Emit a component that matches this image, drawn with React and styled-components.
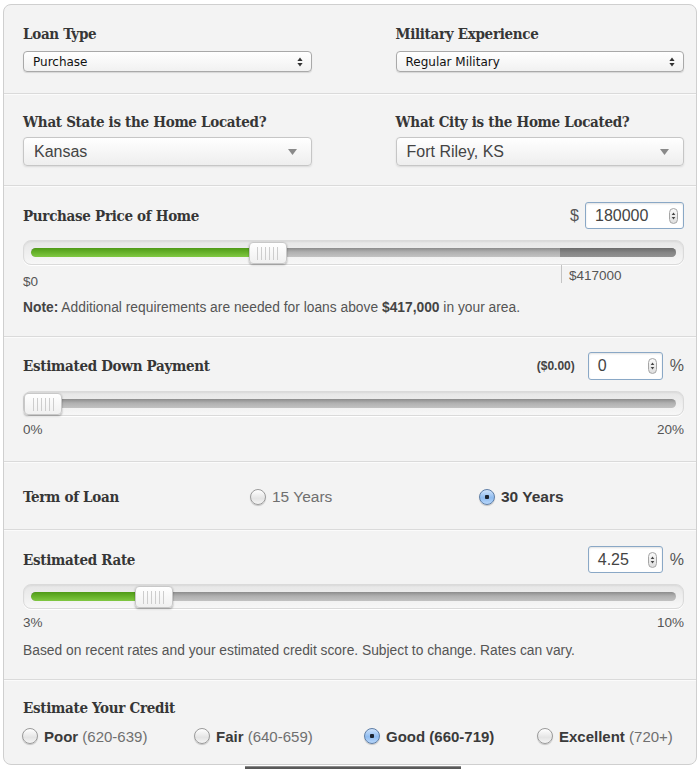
import React from 'react'
import styled, { createGlobalStyle } from 'styled-components'

const GlobalStyle = createGlobalStyle`
  body {
    margin: 0;
    background: #fff;
    font-family: "Liberation Sans", Arial, sans-serif;
    color: #555;
  }
`

const Panel = styled.div`
  margin: 4px 3px 0 3px;
  background: #f3f3f3;
  border: 1px solid #cfcfcf;
  border-radius: 8px;
  overflow: hidden;
`

const Section = styled.div`
  padding: ${props => props.pad || '18px 12px 20px 19px'};
  border-top: ${props => props.first ? 'none' : '1px solid #dadada'};
  box-shadow: ${props => props.first ? 'none' : 'inset 0 1px 0 #fbfbfb'};
`

const TwoCol = styled.div`
  display: grid;
  grid-template-columns: 1fr 1fr;
  column-gap: 84px;
`

const Field = styled.div`
  display: flex;
  flex-direction: column;
  gap: ${props => props.gap || 7}px;
`

const Heading = styled.div`
  font-family: "DejaVu Serif Condensed", "DejaVu Serif", serif;
  font-weight: bold;
  font-size: 15px;
  line-height: 20px;
  letter-spacing: -0.3px;
  color: #363636;
`

const SmallSelect = styled.div`
  height: 19px;
  border: 1px solid #a9a9a9;
  border-radius: 4px;
  background: linear-gradient(#ffffff, #f1f1f1);
  box-shadow: 0 1px 1px rgba(0, 0, 0, 0.12);
  display: flex;
  align-items: center;
  justify-content: space-between;
  padding: 0 8px 0 9px;
  font-family: "DejaVu Sans", sans-serif;
  font-size: 12px;
  color: #111;
`

const BigSelect = styled.div`
  height: 27px;
  border: 1px solid #c6c6c6;
  border-radius: 4px;
  background: linear-gradient(#ffffff, #eeeeee);
  box-shadow: 0 1px 2px rgba(0, 0, 0, 0.1);
  display: flex;
  align-items: center;
  justify-content: space-between;
  padding: 0 14px 0 10px;
  font-size: 16px;
  color: #444;
`

const UpDown = () => (
  <svg width="6" height="10" viewBox="0 0 6 10">
    <path d="M3 0.5 L5.6 4 H0.4 Z" fill="#333" />
    <path d="M3 9.5 L5.6 6 H0.4 Z" fill="#333" />
  </svg>
)

const DownTri = () => (
  <svg width="9" height="6" viewBox="0 0 9 6">
    <path d="M0 0 H9 L4.5 6 Z" fill="#8a8a8a" />
  </svg>
)

const HeadRow = styled.div`
  display: flex;
  align-items: center;
  justify-content: space-between;
  height: ${props => props.h || 27}px;
`

const InputGroup = styled.div`
  display: flex;
  align-items: center;
  gap: ${props => props.gap || 6}px;
  font-size: 16px;
  color: #555;
`

const Amount = styled.span`
  font-size: 12px;
  font-weight: bold;
  color: #444;
  margin-right: 6px;
`

const NumberBox = styled.div`
  box-sizing: border-box;
  width: ${props => props.w}px;
  height: ${props => props.h || 27}px;
  border: 1px solid #8aa8c6;
  border-radius: 3px;
  background: #fff;
  box-shadow: inset 0 1px 2px rgba(0, 0, 0, 0.12);
  display: flex;
  align-items: center;
  justify-content: space-between;
  padding: 0 5px 0 9px;
  font-size: 16px;
  color: #444;
`

const Spinner = styled.div`
  width: 7px;
  height: 14px;
  border: 1px solid #a5a5a5;
  border-radius: 5px;
  background: linear-gradient(#fafafa, #dedede);
  display: flex;
  align-items: center;
  justify-content: center;
`

const SpinArrows = () => (
  <svg width="5" height="10" viewBox="0 0 5 10">
    <path d="M2.5 1.5 L4.3 4 H0.7 Z" fill="#444" />
    <path d="M2.5 8.5 L4.3 6 H0.7 Z" fill="#444" />
  </svg>
)

const Track = styled.div`
  position: relative;
  margin-top: 11px;
  height: 23px;
  border: 1px solid #dadada;
  border-radius: 8px;
  background: linear-gradient(#e6e6e6, #f7f7f7);
  box-shadow: inset 0 1px 2px rgba(0, 0, 0, 0.06), 0 1px 0 #fff;
  display: flex;
  align-items: center;
  padding: 0 7px;
`

const Groove = styled.div`
  position: relative;
  flex: 1;
  height: 9px;
  border-radius: 5px;
  background: linear-gradient(#8c8c8c, #b0b0b0 45%, #c2c2c2);
  overflow: hidden;
`

const Fill = styled.div`
  position: absolute;
  top: 0;
  bottom: 0;
  left: 0;
  border-radius: 5px;
  background: linear-gradient(#4f9a17, #67b22b 50%, #80c842);
`

const OverLimit = styled.div`
  position: absolute;
  top: 0;
  bottom: 0;
  right: 0;
  background: linear-gradient(#6b6b6b, #858585 50%, #929292);
`

const Handle = styled.div`
  position: absolute;
  top: 1px;
  box-sizing: border-box;
  width: 38px;
  height: 22px;
  border: 1px solid #c8c8c8;
  border-radius: 4px;
  background: linear-gradient(#ffffff, #f0f0f0);
  box-shadow: 0 1px 2px rgba(0, 0, 0, 0.35);
  display: flex;
  align-items: center;
  justify-content: center;
  gap: 3px;
`

const Grip = styled.span`
  width: 1px;
  height: 13px;
  background: #cdcdcd;
`

const Scale = styled.div`
  position: relative;
  display: flex;
  justify-content: space-between;
  font-size: 13.5px;
  line-height: 16px;
  color: #555;
  margin-top: ${props => props.top || 6}px;
`

const Limit = styled.div`
  position: absolute;
  top: -9px;
  height: 18px;
  box-sizing: border-box;
  padding-top: 3px;
  border-left: 1px solid #c4c4c4;
  padding-left: 7px;
  line-height: 16px;
`

const Note = styled.p`
  margin: ${props => props.top || 10}px 0 0;
  font-size: 13.8px;
  line-height: 16px;
  color: #555;
  b {
    color: #444;
  }
`

const TermRow = styled.div`
  display: grid;
  grid-template-columns: 227px 229px 1fr;
  align-items: center;
  height: 20px;
`

const CreditRow = styled.div`
  display: grid;
  grid-template-columns: 172px 170px 173px 1fr;
  align-items: center;
  height: 18px;
  margin-left: -1px;
  margin-top: 9px;
`

const RadioLabel = styled.label`
  display: flex;
  align-items: center;
  gap: 6px;
  font-size: ${props => props.size || 15}px;
  color: ${props => props.checked ? '#3a3a3a' : '#6f6f6f'};
  font-weight: ${props => props.checked ? 'bold' : 'normal'};
  b {
    color: #3a3a3a;
  }
`

const Dot = styled.span`
  box-sizing: border-box;
  width: 16px;
  height: 16px;
  border-radius: 50%;
  border: 1px solid ${props => props.checked ? '#5e7ea6' : '#9a9a9a'};
  background: ${props => props.checked
    ? 'radial-gradient(circle at 50% 50%, #1c2430 0 2px, transparent 2.5px), linear-gradient(#cfe3fb, #8fbcf0 55%, #b7d6fa)'
    : 'linear-gradient(#ffffff, #e4e4e4 60%, #f4f4f4)'};
  box-shadow: 0 1px 1px rgba(0, 0, 0, 0.2);
  flex-shrink: 0;
`

const Radio = ({checked, size, children}) => (
  <RadioLabel checked={checked} size={size}>
    <Dot checked={checked} />
    <span>{children}</span>
  </RadioLabel>
)

const Tab = styled.div`
  width: 216px;
  height: 20px;
  margin: 1px 0 0 245px;
  background: linear-gradient(#5a5a5a, #3e3e3e);
  border-top: 1px solid #8a8a8a;
`

const Slider = ({pct, limit, fill}) => {
  const pos = `calc(${pct / 100} * (100% - 38px))`
  return (
    <Track>
      <Groove>
        {fill && <Fill style={{width: `calc(${pct / 100} * (100% + 14px - 38px) + 19px)`}} />}
        {limit && <OverLimit style={{left: `calc(${limit}% - 1px)`}} />}
      </Groove>
      <Handle style={{left: pos}}>
        {[0, 1, 2, 3, 4, 5].map(i => <Grip key={i} />)}
      </Handle>
    </Track>
  )
}

const Spin = () => (
  <Spinner><SpinArrows /></Spinner>
)

export default function App() {
  return (
    <>
      <GlobalStyle />
      <Panel>
        <Section first pad="19px 12px 21px 19px">
          <TwoCol>
            <Field>
              <Heading>Loan Type</Heading>
              <SmallSelect>Purchase<UpDown /></SmallSelect>
            </Field>
            <Field>
              <Heading>Military Experience</Heading>
              <SmallSelect>Regular Military<UpDown /></SmallSelect>
            </Field>
          </TwoCol>
        </Section>

        <Section pad="18px 12px 19px 19px">
          <TwoCol>
            <Field gap={5}>
              <Heading>What State is the Home Located?</Heading>
              <BigSelect>Kansas<DownTri /></BigSelect>
            </Field>
            <Field gap={5}>
              <Heading>What City is the Home Located?</Heading>
              <BigSelect>Fort Riley, KS<DownTri /></BigSelect>
            </Field>
          </TwoCol>
        </Section>

        <Section pad="16px 12px 20px 19px">
          <HeadRow>
            <Heading>Purchase Price of Home</Heading>
            <InputGroup>
              $
              <NumberBox w={99}>180000<Spin /></NumberBox>
            </InputGroup>
          </HeadRow>
          <Slider pct={36.2} limit={82.1} fill />
          <Scale top={9}>
            <span>$0</span>
            <Limit style={{left: '81.4%'}}>$417000</Limit>
          </Scale>
          <Note top={10}><b>Note:</b> Additional requirements are needed for loans above <b>$417,000</b> in your area.</Note>
        </Section>

        <Section pad="15px 12px 23px 19px">
          <HeadRow h={28}>
            <Heading>Estimated Down Payment</Heading>
            <InputGroup gap={7}>
              <Amount>($0.00)</Amount>
              <NumberBox w={75} h={28}>0<Spin /></NumberBox>
              %
            </InputGroup>
          </HeadRow>
          <Slider pct={0} />
          <Scale>
            <span>0%</span>
            <span>20%</span>
          </Scale>
        </Section>

        <Section pad="25px 12px 22px 19px">
          <TermRow>
            <Heading>Term of Loan</Heading>
            <Radio size={15.5}>15 Years</Radio>
            <Radio size={15.5} checked>30 Years</Radio>
          </TermRow>
        </Section>

        <Section pad="16px 12px 20px 19px">
          <HeadRow>
            <Heading>Estimated Rate</Heading>
            <InputGroup gap={7}>
              <NumberBox w={75}>4.25<Spin /></NumberBox>
              %
            </InputGroup>
          </HeadRow>
          <Slider pct={17.8} fill />
          <Scale>
            <span>3%</span>
            <span>10%</span>
          </Scale>
          <Note top={12}>Based on recent rates and your estimated credit score. Subject to change. Rates can vary.</Note>
        </Section>

        <Section pad="18px 12px 19px 19px">
          <Heading>Estimate Your Credit</Heading>
          <CreditRow>
            <Radio><b>Poor</b> (620-639)</Radio>
            <Radio><b>Fair</b> (640-659)</Radio>
            <Radio checked>Good (660-719)</Radio>
            <Radio><b>Excellent</b> (720+)</Radio>
          </CreditRow>
        </Section>
      </Panel>
      <Tab />
    </>
  )
}
